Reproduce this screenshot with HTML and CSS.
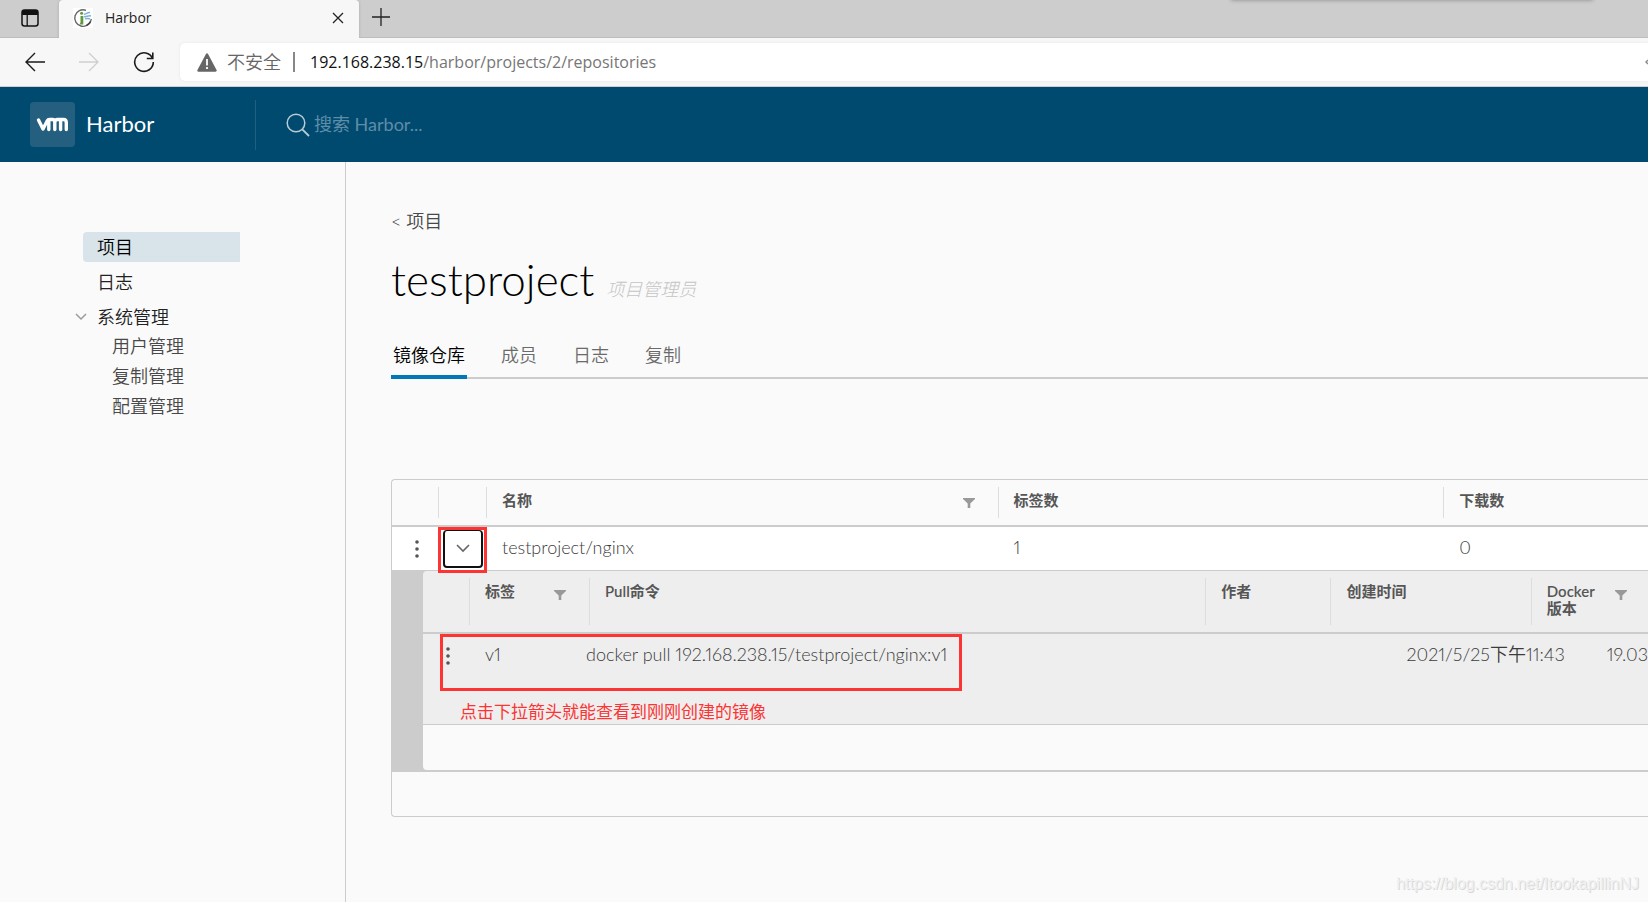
FILE: index.html
```html
<!DOCTYPE html>
<html lang="zh-CN">
<head>
<meta charset="utf-8">
<title>Harbor</title>
<link rel="stylesheet" href="styles.css">
</head>
<body>
<div class="browser">
  <div class="tabstrip">
    <button class="icon-btn tab-actions" aria-label="Tab actions">
      <svg width="18" height="18" viewBox="0 0 18 18"><rect x="1" y="1" width="16" height="16" rx="2.5" fill="none" stroke="#111" stroke-width="1.5"/><path d="M1 3.500a2.500 2.500 0 0 1 2.500-2.500h11a2.500 2.500 0 0 1 2.500 2.500V6H1z" fill="#111"/><path d="M6.200 6v11" stroke="#111" stroke-width="1.300"/></svg>
    </button>
    <div class="tab">
      <svg class="favicon" width="20" height="20" viewBox="0 0 20 20"><rect width="20" height="20" fill="#fff"/><path d="M13 2.300A8.300 8.300 0 1 0 18.300 11" fill="none" stroke="#666" stroke-width="1.400"/><path d="M17.500 13.500a8.300 8.300 0 0 1-4 4" fill="none" stroke="#444" stroke-width="1.600"/><path d="M7.500 8h2.800v8.500H6.500l1-2z" fill="#5f9a3c"/><circle cx="8.600" cy="5.300" r="1.500" fill="#5f9a3c"/><path d="M11 6c2 1 3-2 6-1.500M11 8.500c2 1 4-1.500 7-.500M12 10.500c2 .500 3-.500 5 .500" fill="none" stroke="#7fb1dc" stroke-width="1.500"/></svg>
      <span class="tab-title">Harbor</span>
      <button class="icon-btn" aria-label="Close tab"><svg width="12" height="12" viewBox="0 0 12 12"><path d="M1 1l10 10M11 1L1 11" stroke="#222" stroke-width="1.300"/></svg></button>
    </div>
    <button class="icon-btn new-tab" aria-label="New tab"><svg width="18" height="18" viewBox="0 0 18 18"><path d="M9 0v18M0 9h18" stroke="#222" stroke-width="1.300"/></svg></button>
    <div class="strip-shadow"></div>
  </div>
  <div class="toolbar">
    <button class="icon-btn" aria-label="Back"><svg width="20" height="20" viewBox="0 0 20 20"><path d="M20 10H1M10 1L1 10l9 9" fill="none" stroke="#1b1b1b" stroke-width="1.400"/></svg></button>
    <button class="icon-btn" aria-label="Forward"><svg width="20" height="20" viewBox="0 0 20 20"><path d="M0 10h19M10 1l9 9-9 9" fill="none" stroke="#cfcfcf" stroke-width="1.400"/></svg></button>
    <button class="icon-btn" aria-label="Reload"><svg width="22" height="22" viewBox="0 0 22 22"><path d="M19.600 7.500A9.300 9.300 0 1 0 20.300 11M19.800 1.500v6h-6" fill="none" stroke="#1b1b1b" stroke-width="1.600"/></svg></button>
    <div class="address">
      <svg width="20" height="19" viewBox="0 0 20 19"><path d="M10 1.500L18.500 17.500h-17z" fill="#666" stroke="#666" stroke-width="2.400" stroke-linejoin="round"/><path d="M10 6v6.500M10 14v2" stroke="#fff" stroke-width="1.800"/></svg>
      <span class="insecure">不安全</span>
      <span class="address-divider"></span>
      <span class="url"><b>192.168.238.15</b>/harbor/projects/2/repositories</span>
      <svg class="address-end" width="3" height="6" viewBox="0 0 3 6"><path d="M3 1L1 3l2 2" fill="none" stroke="#888" stroke-width="1.400"/></svg>
    </div>
  </div>
</div>

<header class="header">
  <a class="brand" href="#"><span class="logo"><svg width="33" height="15" viewBox="0 0 33 15"><path d="M2.500 3L7 12 11.300 3.800Q12 2.500 13.500 2.500H16.500Q18.800 2.500 18.800 5V12.500M12.800 12.500V4M18.800 12.500V5.500Q19 2.500 21.500 2.500H27.500Q30.300 2.500 30.300 5.500V12.500M24.600 12.500V4" fill="none" stroke="#fff" stroke-width="3.400" stroke-linecap="round" stroke-linejoin="round"/></svg></span><span>Harbor</span></a>
  <label class="search">
    <svg width="24" height="24" viewBox="0 0 24 24"><circle cx="10" cy="10" r="8.800" fill="none" stroke="#b8cbd6" stroke-width="1.500"/><path d="M16.300 16.300L23 23" stroke="#b8cbd6" stroke-width="1.800"/></svg>
    <input type="text" placeholder="搜索 Harbor..." aria-label="搜索 Harbor">
  </label>
</header>

<div class="layout">
  <nav class="sidenav">
    <a class="nav-item active" href="#">项目</a>
    <a class="nav-item" href="#">日志</a>
    <button class="nav-item nav-group"><svg width="12" height="8" viewBox="0 0 12 8"><path d="M1 1l5 5 5-5" fill="none" stroke="#9a9a9a" stroke-width="1.500"/></svg>系统管理</button>
    <div class="subnav">
      <a href="#">用户管理</a>
      <a href="#">复制管理</a>
      <a href="#">配置管理</a>
    </div>
  </nav>
  <main class="content">
    <a class="back" href="#">&lt; 项目</a>
    <h1 class="title">testproject <em>项目管理员</em></h1>
    <div class="tabs">
      <button class="page-tab selected">镜像仓库</button>
      <button class="page-tab">成员</button>
      <button class="page-tab">日志</button>
      <button class="page-tab">复制</button>
    </div>
    <div class="datagrid">
      <table class="grid outer">
        <thead>
          <tr>
            <th aria-label="操作"></th><th aria-label="展开"></th>
            <th><span>名称</span><button class="icon-btn" aria-label="筛选名称"><svg width="12" height="10" viewBox="0 0 12 10"><path d="M0 0h12v1L7.300 5.500V10H4.700V5.500L0 1z" fill="#999"/></svg></button></th>
            <th><span>标签数</span></th><th><span>下载数</span></th>
          </tr>
        </thead>
        <tbody>
          <tr>
            <td><button class="icon-btn" aria-label="操作"><svg width="4" height="18" viewBox="0 0 4 18"><g fill="#555"><circle cx="2" cy="2" r="1.800"/><circle cx="2" cy="9" r="1.800"/><circle cx="2" cy="16" r="1.800"/></g></svg></button></td>
            <td class="expand"><button class="caret" aria-label="展开"><svg width="14" height="9" viewBox="0 0 14 9"><path d="M1 1l6 6 6-6" fill="none" stroke="#666" stroke-width="1.600"/></svg></button></td>
            <td>testproject/nginx</td><td>1</td><td>0</td>
          </tr>
        </tbody>
      </table>
      <div class="detail">
        <table class="grid inner">
          <thead>
            <tr>
              <th aria-label="操作"></th>
              <th><span>标签</span><button class="icon-btn" aria-label="筛选标签"><svg width="12" height="10" viewBox="0 0 12 10"><path d="M0 0h12v1L7.300 5.500V10H4.700V5.500L0 1z" fill="#999"/></svg></button></th>
              <th><span>Pull命令</span></th><th><span>作者</span></th><th><span>创建时间</span></th>
              <th><span>Docker<br>版本</span><button class="icon-btn" aria-label="筛选版本"><svg width="12" height="10" viewBox="0 0 12 10"><path d="M0 0h12v1L7.300 5.500V10H4.700V5.500L0 1z" fill="#999"/></svg></button></th>
            </tr>
          </thead>
          <tbody>
            <tr>
              <td><button class="icon-btn" aria-label="操作"><svg width="4" height="18" viewBox="0 0 4 18"><g fill="#555"><circle cx="2" cy="2" r="1.800"/><circle cx="2" cy="9" r="1.800"/><circle cx="2" cy="16" r="1.800"/></g></svg></button></td>
              <td>v1</td><td>docker pull 192.168.238.15/testproject/nginx:v1</td><td></td><td>2021/5/25下午11:43</td><td>19.03</td>
            </tr>
          </tbody>
        </table>
        <div class="mark-row"></div>
        <p class="note">点击下拉箭头就能查看到刚刚创建的镜像</p>
        <div class="inner-foot"></div>
      </div>
      <div class="outer-foot"></div>
    </div>
  </main>
</div>
<div class="watermark">https://blog.csdn.net/ItookapillinNJ</div>
</body>
</html>
```
FILE: styles.css
```css
* { box-sizing: border-box; }
html, body { height: 100%; }
body {
  margin: 0;
  display: flex;
  flex-direction: column;
  overflow: hidden;
  background: #fafafa;
  color: #484848;
  font: 350 18px/24px Lato, "Noto Sans CJK SC", sans-serif;
}
button, input { font: inherit; color: inherit; border: 0; padding: 0; background: none; }
a { color: inherit; text-decoration: none; }
svg { display: block; flex: none; }
.icon-btn { display: flex; flex: none; }

/* browser chrome */
.browser { flex: none; font-family: "Open Sans", "Noto Sans CJK SC", sans-serif; }
.tabstrip {
  position: relative;
  display: flex;
  align-items: center;
  height: 38px;
  background: #cdcdcd;
  border-bottom: 1px solid #bdbdbd;
}
.tab-actions { padding: 0 20px 2px 21px; }
.tab {
  display: flex;
  align-items: center;
  align-self: stretch;
  width: 300px;
  margin-bottom: -1px;
  padding: 0 15px 2px 14px;
  background: #f7f7f7;
  border-radius: 4px 4px 0 0;
  box-shadow: 0 0 3px #aaa;
  clip-path: inset(0 -4px 0 -4px);
}
.tab-title { flex: 1; margin-left: 12px; font-size: 14px; font-weight: 400; color: #222; }
.new-tab { margin: 0 0 4px 13px; }
.strip-shadow {
  position: absolute;
  top: -10px;
  right: 55px;
  width: 362px;
  height: 10px;
  box-shadow: 0 0 4px #888;
}
.toolbar {
  display: flex;
  align-items: center;
  height: 49px;
  padding-left: 25px;
  background: #f7f7f7;
  border-bottom: 1px solid #cfcfcf;
}
.toolbar > .icon-btn { margin-right: 34px; }
.toolbar > .icon-btn:nth-child(3) { margin-right: 25px; }
.address {
  display: flex;
  flex: 1;
  align-items: center;
  height: 38px;
  padding-left: 17px;
  background: #fff;
  border-radius: 5px 0 0 5px;
  box-shadow: 0 0 3px #e4e4e4;
  font-size: 16px;
  font-weight: 400;
  color: #767676;
  white-space: nowrap;
}
.insecure { margin: 0 12px 0 10px; padding-bottom: 1px; font-size: 18px; font-weight: 350; color: #666; }
.address-divider { width: 2px; height: 20px; margin-right: 15px; background: #888; }
.url b { font-weight: 400; color: #111; }
.address-end { margin-left: auto; }

/* application header */
.header {
  display: flex;
  flex: none;
  align-items: center;
  height: 75px;
  background: #004a70;
}
.brand {
  display: flex;
  align-items: center;
  gap: 11px;
  width: 256px;
  height: 50px;
  padding-left: 30px;
  border-right: 1px solid #1f5f80;
  color: #fff;
  font-size: 22px;
  font-weight: 400;
  line-height: 20px;
}
.brand > span:last-child { padding-bottom: 2px; }
.logo {
  display: flex;
  align-items: center;
  justify-content: center;
  width: 45px;
  height: 45px;
  border-radius: 4px;
  background: #245f80;
}
.search { display: flex; flex: 1; align-items: center; gap: 4px; padding-left: 30px; }
.search input { flex: 1; padding-bottom: 2px; font-size: 18px; font-weight: 400; outline: 0; }
.search input::placeholder { color: #5f8da7; opacity: 1; }

/* page layout */
.layout { display: flex; flex: 1; min-height: 0; }
.sidenav {
  flex: none;
  width: 346px;
  padding: 70px 105px 0 83px;
  border-right: 1px solid #ccc;
}
.nav-item {
  display: flex;
  align-items: center;
  width: 100%;
  height: 30px;
  margin-bottom: 5px;
  padding: 0 0 1px 14px;
  border-radius: 4px 0 0 4px;
  color: #222;
}
.nav-item.active { background: #d9e4ea; color: #000; }
.nav-group { gap: 10px; margin: 0 0 0 -8px; padding-left: 0; }
.subnav { padding-left: 29px; }
.subnav a { display: block; height: 30px; line-height: 28px; }

.content { flex: 1; min-width: 0; padding: 47px 0 0 45px; }
.back { display: block; }
.title {
  margin: 18px 0 0;
  color: #000;
  font-size: 44px;
  font-weight: 300;
  line-height: 56px;
}
.title em { font-size: 18px; color: #c4c4c4; }
.tabs {
  display: flex;
  gap: 32px;
  margin-top: 24px;
  box-shadow: inset 0 -2px #ccc;
}
.page-tab { height: 38px; padding: 0 2px 7px; border-bottom: 4px solid transparent; color: #6a6a6a; }
.page-tab.selected { border-color: #0079b8; color: #000; }

/* datagrid */
.datagrid {
  margin-top: 100px;
  border: 1px solid #ccc;
  border-right: 0;
  border-radius: 4px 0 0 4px;
}
.grid { display: block; font-variant-numeric: proportional-nums; }
.grid thead, .grid tbody { display: block; }
.grid tr { display: grid; }
.grid th, .grid td { padding: 0 0 0 15px; text-align: left; white-space: nowrap; }
.grid td { color: #3c3c3c; }
.grid th {
  display: flex;
  justify-content: space-between;
  align-items: flex-start;
  padding-right: 23px;
  border-right: 1px solid #ddd;
  color: #565656;
  font-size: 15px;
  font-weight: 600;
  line-height: 17px;
}
.grid th:last-child { border-right: 0; }
.grid th .icon-btn { margin-top: 6px; }
.outer tr { grid-template-columns: 47px 48px 512fr 446fr 204fr; }
.outer thead { padding: 7px 0; border-bottom: 2px solid #ccc; }
.outer th { height: 31px; padding-top: 5px; }
.outer tbody { background: #fff; border-bottom: 1px solid #ccc; }
.outer tbody tr { height: 43px; align-items: center; }
.outer td { padding-bottom: 5px; }
.outer td:first-child { padding: 0 0 0 23px; }
.outer td.expand {
  display: flex;
  justify-content: center;
  height: 46px;
  margin: 0 0 -2px -1px;
  padding: 0;
  border: 3px solid #fc3434;
  z-index: 1;
}
.caret {
  display: flex;
  align-items: center;
  justify-content: center;
  width: 40px;
  height: 38px;
  border: 2px solid #111;
  border-top-width: 1px;
  border-radius: 4px;
}
.detail {
  position: relative;
  padding-left: 31px;
  background: #ccc;
  border-bottom: 2px solid #ccc;
}
.inner { background: #eee; border-radius: 4px 0 0; }
.inner thead { padding: 7px 0; border-bottom: 2px solid #ccc; }
.inner thead tr { grid-template-columns: 47px 120px 615fr 125fr 200fr 116fr; }
.inner th { height: 47px; padding-top: 5px; }
.inner th .icon-btn { margin-top: 7px; }
.inner th:last-child { padding-right: 21px; }
.inner tbody tr { grid-template-columns: 47px 101px 702fr 117fr 200fr 43fr; height: 50px; }
.inner td { padding-top: 8px; }
.inner td:first-child { padding: 13px 0 0 23px; }
.mark-row {
  position: absolute;
  top: 63px;
  left: 48px;
  width: 522px;
  height: 57px;
  border: 3px solid #fc3434;
}
.note {
  margin: 0;
  padding: 16px 0 0 37px;
  height: 40px;
  background: #eee;
  color: #fc3434;
  font-size: 17px;
  font-weight: 400;
}
.inner-foot {
  height: 46px;
  background: #fafafa;
  border-top: 1px solid #ccc;
  border-radius: 0 0 0 4px;
}
.outer-foot { height: 44px; }
.watermark {
  position: absolute;
  right: 9px;
  bottom: 8px;
  color: #f0f0f0;
  font: 400 16px/20px "Liberation Sans", Arial, sans-serif;
  text-shadow: 1px 1px #d8d8d8;
}
```
